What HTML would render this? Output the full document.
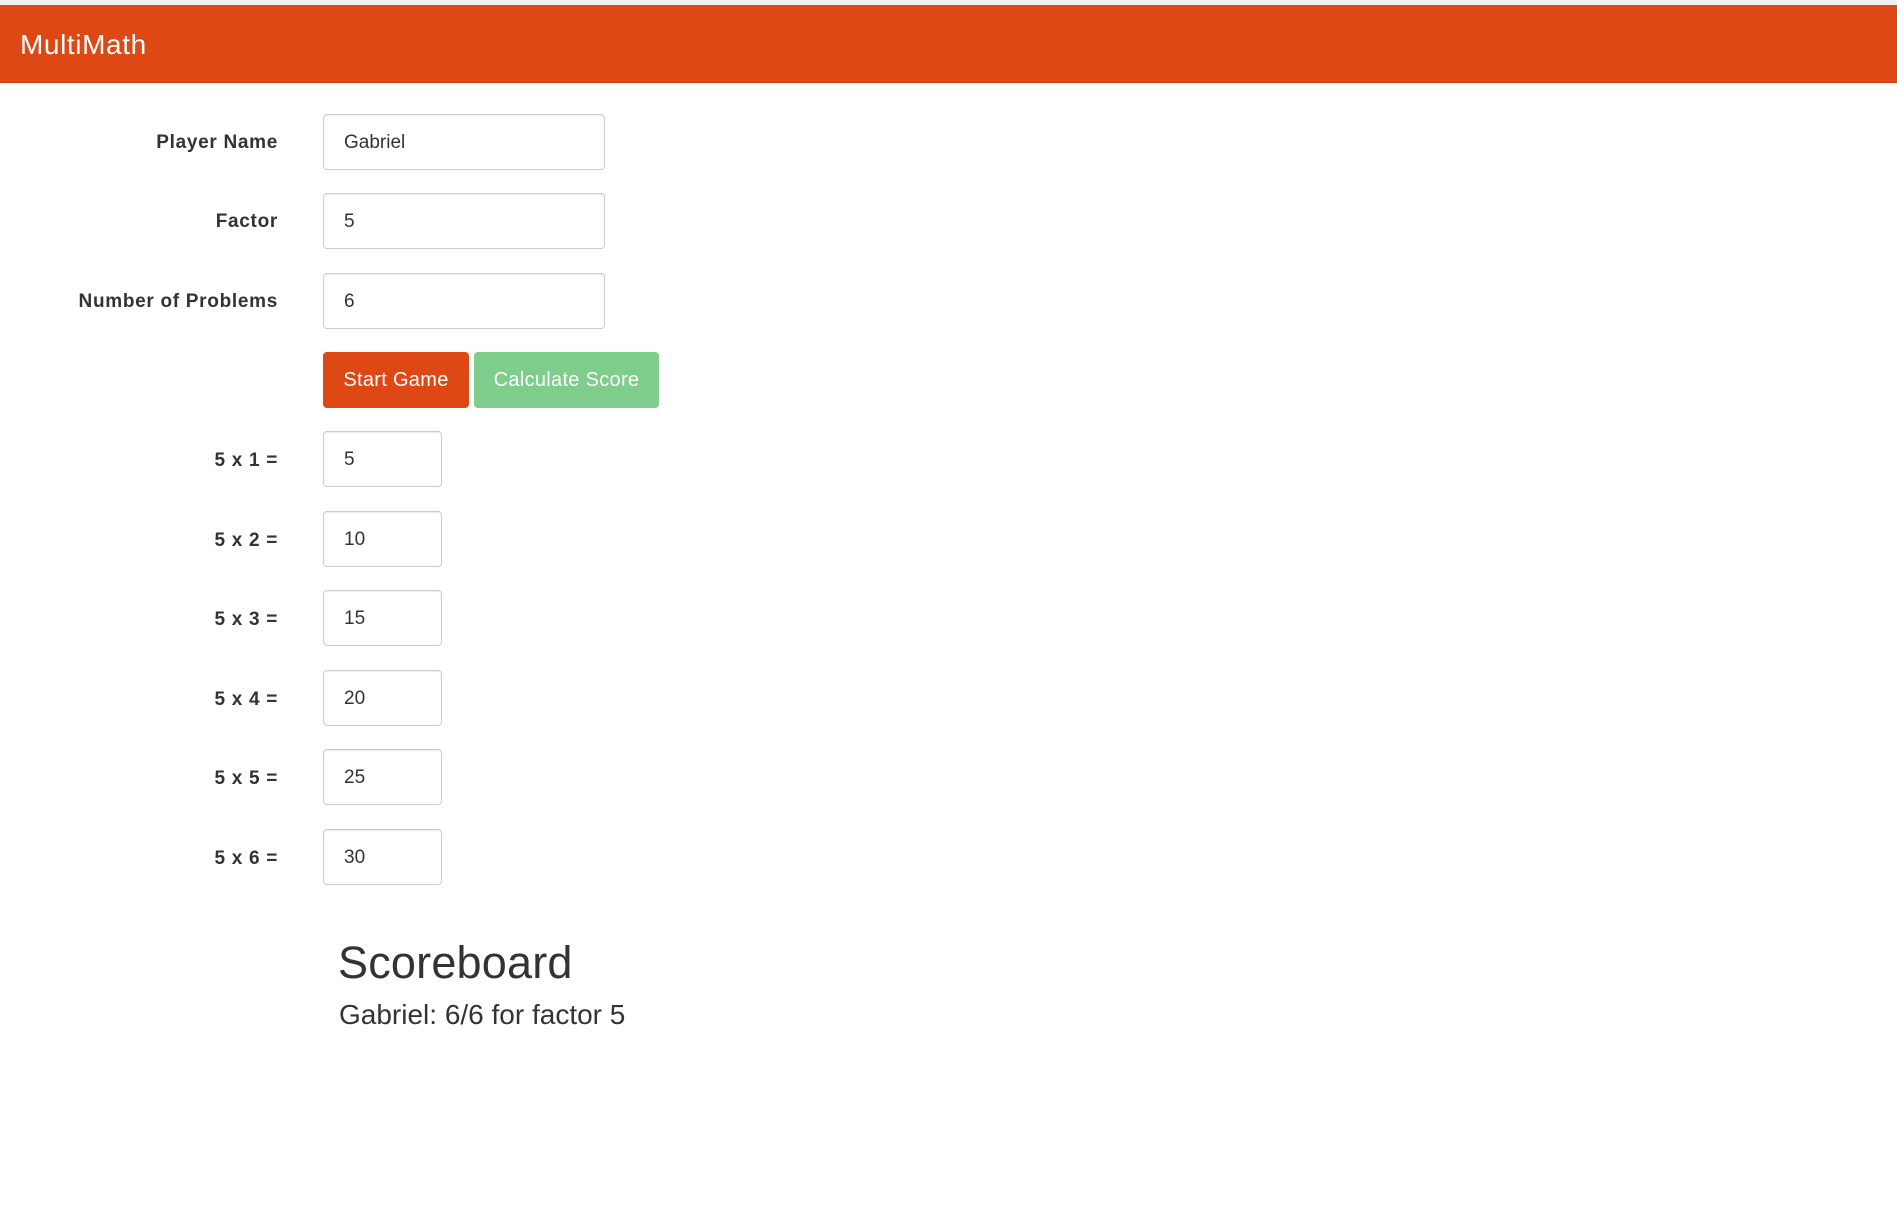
<!DOCTYPE html>
<html><head><style>
body{margin:0;width:1897px;height:1222px;background:#fff;font-family:"Liberation Sans",sans-serif;color:#333;position:relative;overflow:hidden}
.top{position:absolute;left:0;top:0;width:1897px;height:5px;background:#f0f0f0}
.nav{position:absolute;left:0;top:5px;width:1897px;height:77px;background:#dd4814;border-bottom:1px solid #c43e10}
.brand{position:absolute;left:20px;top:25px;color:#fff;font-size:28px;line-height:30px;letter-spacing:0.6px}
.lbl{position:absolute;right:calc(1897px - 278px);font-weight:bold;font-size:19px;line-height:20px;text-align:right;white-space:nowrap;letter-spacing:0.7px}
.in{position:absolute;box-sizing:border-box;border:1px solid #ccc;border-radius:4px;height:56px;font-size:19px;padding-left:20px;line-height:56px;color:#333;box-shadow:inset 0 1px 1px rgba(0,0,0,.075)}
.btn{position:absolute;top:352px;height:56px;border-radius:4px;color:#fff;font-size:20px;line-height:56px;text-align:center;letter-spacing:0.3px}
</style></head><body>
<div class="top"></div>
<div class="nav"><div class="brand">MultiMath</div></div>

<div class="lbl" style="top:133px">Player Name</div>
<div class="in" style="left:323px;top:114px;width:282px">Gabriel</div>
<div class="lbl" style="top:212px">Factor</div>
<div class="in" style="left:323px;top:193px;width:282px">5</div>
<div class="lbl" style="top:292px">Number of Problems</div>
<div class="in" style="left:323px;top:273px;width:282px">6</div>

<div class="btn" style="left:323px;width:146px;background:#dd4814">Start Game</div>
<div class="btn" style="left:474px;width:185px;background:#7fcd8a">Calculate Score</div>

<div class="lbl" style="top:451px">5 x 1 =</div><div class="in" style="left:323px;top:431px;width:119px">5</div>
<div class="lbl" style="top:531px">5 x 2 =</div><div class="in" style="left:323px;top:511px;width:119px">10</div>
<div class="lbl" style="top:610px">5 x 3 =</div><div class="in" style="left:323px;top:590px;width:119px">15</div>
<div class="lbl" style="top:690px">5 x 4 =</div><div class="in" style="left:323px;top:670px;width:119px">20</div>
<div class="lbl" style="top:769px">5 x 5 =</div><div class="in" style="left:323px;top:749px;width:119px">25</div>
<div class="lbl" style="top:849px">5 x 6 =</div><div class="in" style="left:323px;top:829px;width:119px">30</div>

<div style="position:absolute;left:338px;top:935px;font-size:45px;line-height:56px;letter-spacing:0.2px">Scoreboard</div>
<div style="position:absolute;left:339px;top:999px;font-size:28px;line-height:32px">Gabriel: 6/6 for factor 5</div>
</body></html>
